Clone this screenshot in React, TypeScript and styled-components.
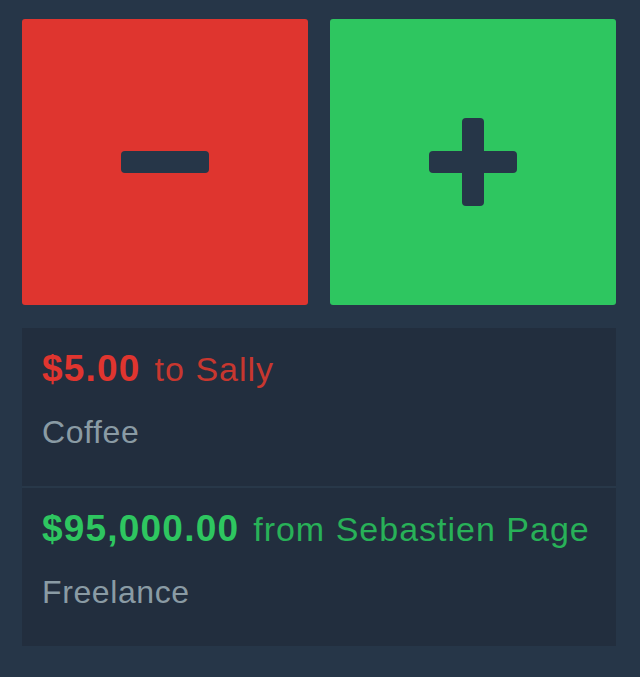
import React from "react";
import styled, { createGlobalStyle } from "styled-components";

const Global = createGlobalStyle`
  html, body {
    margin: 0;
    padding: 0;
    background: #263648;
  }
  body {
    font-family: "Liberation Sans", Arial, Helvetica, sans-serif;
    -webkit-font-smoothing: antialiased;
  }
`;

const Page = styled.div`
  width: 640px;
  height: 677px;
  box-sizing: border-box;
  padding: 19px 24px 0 22px;
  background: #263648;
  display: flex;
  flex-direction: column;
  gap: 23px;
`;

const ButtonGrid = styled.div`
  display: grid;
  grid-template-columns: 286px 286px;
  gap: 22px;
`;

const ActionButton = styled.button<{ $tone: "red" | "green" }>`
  width: 286px;
  height: 286px;
  border: none;
  border-radius: 3px;
  padding: 0;
  margin: 0;
  display: flex;
  align-items: center;
  justify-content: center;
  cursor: pointer;
  background: ${(p) => (p.$tone === "red" ? "#df352f" : "#2ec660")};
`;

const List = styled.div`
  background: #222e3e;
  display: flex;
  flex-direction: column;
`;

const Divider = styled.div`
  height: 2px;
  background: #283849;
`;

const Row = styled.div`
  padding: 21px 20px 34px 20px;
  display: flex;
  flex-direction: column;
  gap: 23px;
`;

const Headline = styled.div`
  display: flex;
  align-items: baseline;
  gap: 14px;
  height: 40px;
  line-height: 40px;
  white-space: nowrap;
`;

const Amount = styled.span<{ $tone: "red" | "green" }>`
  font-size: 37px;
  font-weight: 700;
  letter-spacing: 1.2px;
  color: ${(p) => (p.$tone === "red" ? "#e0352f" : "#2ec660")};
`;

const Party = styled.span<{ $tone: "red" | "green" }>`
  font-size: 34px;
  font-weight: 400;
  letter-spacing: 1px;
  color: ${(p) => (p.$tone === "red" ? "#c8372f" : "#28b158")};
`;

const Memo = styled.div`
  font-size: 32px;
  line-height: 40px;
  height: 40px;
  color: #8a9ba4;
  letter-spacing: 0.6px;
`;

const MinusIcon = () => (
  <svg width="88" height="88" viewBox="0 0 88 88">
    <rect x="0" y="33" width="88" height="22" rx="4" fill="#263648" />
  </svg>
);

const PlusIcon = () => (
  <svg width="88" height="88" viewBox="0 0 88 88">
    <rect x="0" y="33" width="88" height="22" rx="4" fill="#263648" />
    <rect x="33" y="0" width="22" height="88" rx="4" fill="#263648" />
  </svg>
);

type Tx = { tone: "red" | "green"; amount: string; party: string; memo: string };

const transactions: Tx[] = [
  { tone: "red", amount: "$5.00", party: "to Sally", memo: "Coffee" },
  { tone: "green", amount: "$95,000.00", party: "from Sebastien Page", memo: "Freelance" },
];

export default function App() {
  return (
    <>
      <Global />
      <Page>
        <ButtonGrid>
          <ActionButton $tone="red" aria-label="Subtract">
            <MinusIcon />
          </ActionButton>
          <ActionButton $tone="green" aria-label="Add">
            <PlusIcon />
          </ActionButton>
        </ButtonGrid>
        <List>
          {transactions.map((t, i) => (
            <React.Fragment key={i}>
              {i > 0 && <Divider />}
              <Row>
                <Headline>
                  <Amount $tone={t.tone}>{t.amount}</Amount>
                  <Party $tone={t.tone}>{t.party}</Party>
                </Headline>
                <Memo>{t.memo}</Memo>
              </Row>
            </React.Fragment>
          ))}
        </List>
      </Page>
    </>
  );
}
